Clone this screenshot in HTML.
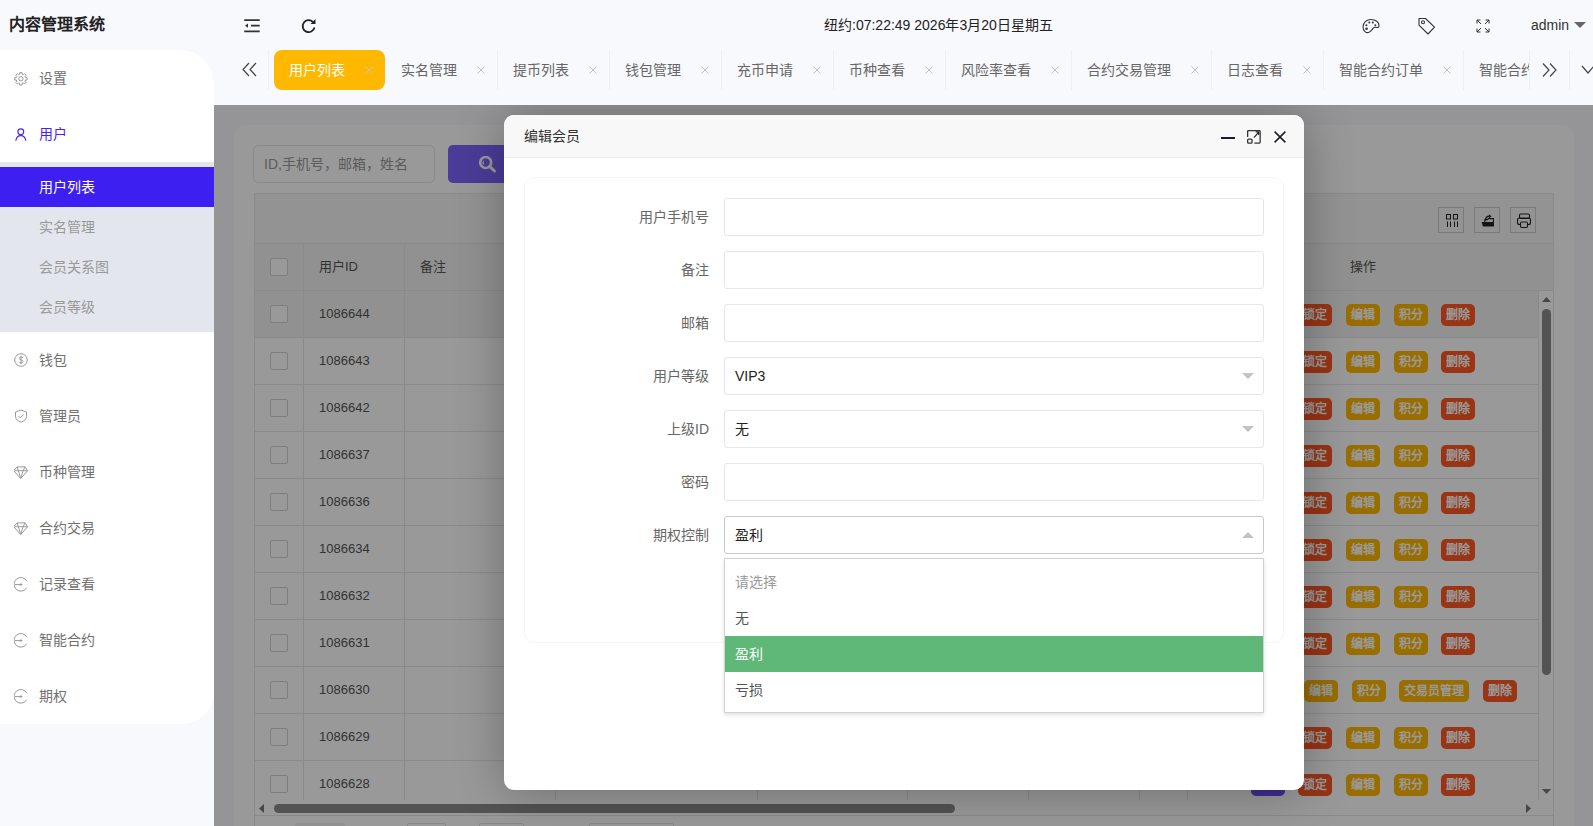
<!DOCTYPE html>
<html lang="zh-CN">
<head>
<meta charset="utf-8">
<style>
*{box-sizing:border-box;margin:0;padding:0}
html,body{width:1593px;height:826px;overflow:hidden}
body{position:relative;background:#f8f9fd;font-family:"Liberation Sans",sans-serif;font-size:14px;color:#333}
.abs{position:absolute}
.logo{left:9px;top:14px;font-size:16px;font-weight:bold;color:#222;line-height:22px;white-space:nowrap}
.side{left:0;top:50px;width:214px;height:674px;background:#fff;border-radius:0 34px 32px 0;overflow:hidden}
.mi{position:absolute;left:0;width:214px;height:56px;line-height:56px;color:#707070;white-space:nowrap}
.mi span{position:absolute;left:39px;top:0}
.mi svg{position:absolute;left:14px;top:21px}
.sub{position:absolute;left:0;top:112px;width:214px;height:170px;background:#e4e6ee}
.si{position:absolute;left:0;width:214px;height:40px;line-height:40px;color:#999}
.si span{position:absolute;left:39px}
.si.on{background:#3d1ff2;color:#fff}
.hd svg{position:absolute}
.time{left:824px;top:15px;line-height:20px;font-size:14px;color:#222;white-space:nowrap}
.admin{left:1531px;top:15px;line-height:20px;color:#333}
.tabs{left:274px;top:50px;width:1256px;height:40px;overflow:hidden;white-space:nowrap}
.tab{position:absolute;top:0;height:40px;line-height:40px;color:#666;border-right:1px solid #eef0f4}
.tab span{position:absolute;left:15px;top:0}
.tab i{position:absolute;top:16px;width:8px;height:8px}.tab i svg{display:block}
.tab.on{background:#ffb800;color:#fff;border-radius:8px;border-right-color:transparent}
.content{left:214px;top:105px;width:1379px;height:721px;background:#f8f9fd;overflow:hidden}
.shade{left:0;top:0;width:1379px;height:721px;background:rgba(0,0,0,0.4)}

.card{position:absolute;left:20px;top:20px;width:1340px;height:780px;background:#fff;border-radius:12px}
.sinput{position:absolute;left:39px;top:40px;width:182px;height:38px;border:1px solid #e6e6e6;border-radius:5px;padding-left:10px;line-height:36px;color:#999;background:#fff;white-space:nowrap}
.sbtn{position:absolute;left:234px;top:40px;width:84px;height:38px;background:#7d65ff;border-radius:5px}
.tbl{position:absolute;left:40px;top:88px;width:1300px;height:740px;border:1px solid #e6e6e6;background:#fff;overflow:hidden}
.ttool{position:absolute;left:0;top:0;width:1298px;height:50px;background:#f6f6f6;border-bottom:1px solid #e6e6e6}
.tico{position:absolute;top:13px;width:26px;height:26px;border:1px solid #ccc}
.tico svg{position:absolute;left:0;top:0}
.thead{position:absolute;left:0;top:50px;width:1298px;height:47px;background:#f2f2f2;border-bottom:1px solid #e6e6e6}
.trow{position:absolute;left:0;width:1283px;height:47px;background:#fff;border-bottom:1px solid #e6e6e6}
.trow.hov{background:#f2f2f2}
.vl{position:absolute;top:0;width:1px;height:47px;background:#e6e6e6}
.thead span,.trow span{position:absolute;top:0;line-height:46px;color:#555;font-size:13px;white-space:nowrap}
.cb{position:absolute;width:18px;height:18px;border:1px solid #d2d2d2;border-radius:2px;background:#fff}
.btn{position:absolute;top:13px;height:22px;line-height:22px;border-radius:5px;color:#fff;font-style:normal;font-size:12px;font-weight:bold;text-align:center;white-space:nowrap}
.btn.y{background:#ffb800}.btn.r{background:#ff5722}.btn.p{background:#6a4cf0}
.vscroll{position:absolute;left:1283px;top:97px;width:15px;height:509px;background:#fff;border-left:1px solid #e6e6e6}
.vthumb{position:absolute;left:3px;top:18px;width:9px;height:366px;border-radius:4.5px;background:#8a8a8a}
.hscroll{position:absolute;left:0;top:606px;width:1298px;height:15px;background:#fff}
.hthumb{position:absolute;left:19px;top:4px;width:681px;height:9px;border-radius:4.5px;background:#8a8a8a}
.pager{position:absolute;left:0;top:621px;width:1298px;height:60px;border-top:1px solid #e6e6e6;background:#fff}
.modal{left:290px;top:10px;width:800px;height:675px;background:#fff;border-radius:10px;box-shadow:1px 1px 50px rgba(0,0,0,.3);overflow:hidden}
.mtitle{position:absolute;left:0;top:0;width:800px;height:43px;background:#f8f8f8;border-bottom:1px solid #eee;padding-left:20px;line-height:42px;color:#333;font-size:14px}
.fcard{position:absolute;left:20px;top:62px;width:760px;height:466px;border:1px solid #f6f6f6;border-radius:10px}
.lbl{position:absolute;left:80px;width:125px;height:38px;line-height:38px;text-align:right;color:#666;white-space:nowrap}
.inp{position:absolute;left:220px;width:540px;height:38px;border:1px solid #e6e6e6;border-radius:3px;background:#fff;line-height:36px;padding-left:10px;color:#222}
.inp.focus{border-color:#c9c9c9}
.arr{position:absolute;right:9px;top:15px;width:0;height:0;border-left:6px solid transparent;border-right:6px solid transparent;border-top:6px solid #c2c2c2}
.arr.up{border-top:0;border-bottom:6px solid #c2c2c2;top:15px}
.dd{position:absolute;left:220px;top:443px;width:540px;height:155px;border:1px solid #d2d2d2;background:#fff;box-shadow:0 2px 4px rgba(0,0,0,.12);padding:5px 0}
.opt{height:36px;line-height:36px;padding-left:10px;color:#555}
.opt.ph{color:#999}
.opt.on{background:#5fb878;color:#fff}
.pg{position:absolute;top:7px;height:30px;border:1px solid #e2e2e2;border-radius:2px}
</style>
</head>
<body>
<div class="abs logo">内容管理系统</div>

<!-- sidebar -->
<div class="abs side">
  <div class="mi" style="top:0"><svg width="16" height="16" viewBox="0 0 16 16" fill="none" stroke="#999" stroke-width="1" stroke-linejoin="round"><circle cx="6.9" cy="7.8" r="2.2"/><path d="M5.68 3.26 L5.70 1.62 L8.10 1.62 L8.12 3.26 L9.25 3.73 L10.42 2.58 L12.12 4.28 L10.97 5.45 L11.44 6.58 L13.08 6.60 L13.08 9.00 L11.44 9.02 L10.97 10.15 L12.12 11.32 L10.42 13.02 L9.25 11.87 L8.12 12.34 L8.10 13.98 L5.70 13.98 L5.68 12.34 L4.55 11.87 L3.38 13.02 L1.68 11.32 L2.83 10.15 L2.36 9.02 L0.72 9.00 L0.72 6.60 L2.36 6.58 L2.83 5.45 L1.68 4.28 L3.38 2.58 L4.55 3.73Z"/></svg><span>设置</span></div>
  <div class="mi" style="top:56px;color:#4a1ff0"><svg width="14" height="14" viewBox="0 0 14 14" fill="none" stroke="#4a1ff0" stroke-width="1.1" style="left:15px;top:22px"><circle cx="5.8" cy="3.8" r="2.9"/><path d="M.8 12.8c.4-3.2 2.2-5.2 5-5.2s4.6 2 5 5.2"/></svg><span>用户</span></div>
  <div class="sub">
    <div class="si on" style="top:5px"><span>用户列表</span></div>
    <div class="si" style="top:45px"><span>实名管理</span></div>
    <div class="si" style="top:85px"><span>会员关系图</span></div>
    <div class="si" style="top:125px"><span>会员等级</span></div>
  </div>
  <div class="mi" style="top:282px"><svg width="14" height="14" viewBox="0 0 14 14" fill="none" stroke="#999" stroke-width="1"><circle cx="7" cy="7" r="6.3"/><path d="M8.9 4.9c-.4-.6-1-.9-1.9-.9-1 0-1.8.6-1.8 1.4 0 1.9 3.9 1.1 3.9 3.1 0 .9-.8 1.5-2 1.5-.9 0-1.6-.4-2-1M7 2.8v8.4"/></svg><span>钱包</span></div>
  <div class="mi" style="top:338px"><svg width="14" height="14" viewBox="0 0 14 14" fill="none" stroke="#999" stroke-width="1"><path d="M7 1l5.5 2v4.2c0 3-2.4 5.2-5.5 5.9C3.9 12.4 1.5 10.2 1.5 7.2V3z"/><path d="M4.5 7l1.8 1.8 3.4-3.4"/></svg><span>管理员</span></div>
  <div class="mi" style="top:394px"><svg width="15" height="15" viewBox="0 0 15 15" fill="none" stroke="#999" stroke-width="1"><path d="M3.2 1.9h7.8l2.7 3.8-7 7.8-7-7.8z"/><path d="M0.5 5.7h13.2M4.3 5.7l2.4 7.6 2.4-7.6M3.2 1.9l1.1 3.8M11 1.9l-1.9 3.8"/></svg><span>币种管理</span></div>
  <div class="mi" style="top:450px"><svg width="15" height="15" viewBox="0 0 15 15" fill="none" stroke="#999" stroke-width="1"><path d="M3.2 1.9h7.8l2.7 3.8-7 7.8-7-7.8z"/><path d="M0.5 5.7h13.2M4.3 5.7l2.4 7.6 2.4-7.6M3.2 1.9l1.1 3.8M11 1.9l-1.9 3.8"/></svg><span>合约交易</span></div>
  <div class="mi" style="top:506px"><svg width="15" height="15" viewBox="0 0 15 15" fill="none" stroke="#999" stroke-width="1"><path d="M12.9 4.3A6.8 6.8 0 1 0 12.7 10.7"/><path d="M0.5 7.6h6.5"/><path d="M6.3 5.9l2.4 1.7-2.4 1.7z" fill="#999" stroke="none"/></svg><span>记录查看</span></div>
  <div class="mi" style="top:562px"><svg width="15" height="15" viewBox="0 0 15 15" fill="none" stroke="#999" stroke-width="1"><path d="M12.9 4.3A6.8 6.8 0 1 0 12.7 10.7"/><path d="M0.5 7.6h6.5"/><path d="M6.3 5.9l2.4 1.7-2.4 1.7z" fill="#999" stroke="none"/></svg><span>智能合约</span></div>
  <div class="mi" style="top:618px"><svg width="15" height="15" viewBox="0 0 15 15" fill="none" stroke="#999" stroke-width="1"><path d="M12.9 4.3A6.8 6.8 0 1 0 12.7 10.7"/><path d="M0.5 7.6h6.5"/><path d="M6.3 5.9l2.4 1.7-2.4 1.7z" fill="#999" stroke="none"/></svg><span>期权</span></div>
</div>

<!-- header -->
<div class="hd">
  <svg style="left:244px;top:19px" width="16" height="14" viewBox="0 0 16 14" fill="none" stroke="#333" stroke-width="1.8"><path d="M0.2 1.1h15.5M7 6.7h8.7M0.2 12.4h15.5"/><path d="M1 6.7l3-2.1v4.2z" fill="#333" stroke="none"/></svg>
  <svg style="left:301px;top:18px" width="16" height="16" viewBox="0 0 16 16" fill="none" stroke="#222" stroke-width="1.8"><path d="M13.5 9.5A6 6 0 1 1 12 4"/><path d="M14.5 1v5h-5z" fill="#222" stroke="none"/></svg>
  <div class="abs time">纽约:07:22:49 2026年3月20日星期五</div>
  <svg style="left:1362px;top:18px" width="18" height="16" viewBox="0 0 18 16" fill="none" stroke="#333" stroke-width="1.1"><path d="M9 1.5c4.5 0 8 2.6 8 6 0 1.6-1 2.3-2.2 2-1.4-.4-2.3-.6-3.3.4C10 11.5 9.5 13 7 14.3 4.4 15.5 1 13 1 9 1 4.8 4.5 1.5 9 1.5z"/><circle cx="4.6" cy="10.8" r="1.3" fill="#333" stroke="none"/><circle cx="4.4" cy="7.2" r="1" fill="#333" stroke="none"/><circle cx="7.3" cy="4.5" r="1" fill="#333" stroke="none"/><circle cx="10.8" cy="4.5" r="1" fill="#333" stroke="none"/><circle cx="13.3" cy="7.3" r="1" fill="#333" stroke="none"/></svg>
  <svg style="left:1418px;top:17px" width="18" height="18" viewBox="0 0 18 18" fill="none" stroke="#333" stroke-width="1.1"><path d="M1 1.5h6.5l9 8.7-6.5 6.8L1 8.2z" stroke-linejoin="round"/><circle cx="5" cy="5.3" r="1.5"/></svg>
  <svg style="left:1476px;top:19px" width="14" height="14" viewBox="0 0 14 14" fill="none" stroke="#333" stroke-width="1"><path d="M1 1l4 4M1 1v3.5M1 1h3.5M13 1L9 5M13 1v3.5M13 1H9.5M1 13l4-4M1 13V9.5M1 13h3.5M13 13L9 9M13 13V9.5M13 13H9.5"/></svg>
  <div class="abs admin">admin</div>
  <svg style="left:1574px;top:22px" width="12" height="6" viewBox="0 0 12 6"><path d="M0 0h12L6 6z" fill="#666"/></svg>
</div>

<!-- tabs -->
<svg class="abs" style="left:242px;top:62px" width="15" height="15" viewBox="0 0 15 15" fill="none" stroke="#444" stroke-width="1.2"><path d="M7 1L1 7.5 7 14M14 1L8 7.5 14 14"/></svg>
<div class="abs" style="left:268px;top:50px;width:1px;height:40px;background:#eef0f4"></div>
<div class="abs tabs" id="tabs"><div class="tab on" style="left:0px;width:111px"><span>用户列表</span><i style="left:91px"><svg width="8" height="8" viewBox="0 0 8 8" stroke="#c2c2c2" stroke-width="1"><path d="M.5 .5l7 7M7.5 .5l-7 7"/></svg></i></div><div class="tab" style="left:112px;width:112px"><span>实名管理</span><i style="left:91px"><svg width="8" height="8" viewBox="0 0 8 8" stroke="#c2c2c2" stroke-width="1"><path d="M.5 .5l7 7M7.5 .5l-7 7"/></svg></i></div><div class="tab" style="left:224px;width:112px"><span>提币列表</span><i style="left:91px"><svg width="8" height="8" viewBox="0 0 8 8" stroke="#c2c2c2" stroke-width="1"><path d="M.5 .5l7 7M7.5 .5l-7 7"/></svg></i></div><div class="tab" style="left:336px;width:112px"><span>钱包管理</span><i style="left:91px"><svg width="8" height="8" viewBox="0 0 8 8" stroke="#c2c2c2" stroke-width="1"><path d="M.5 .5l7 7M7.5 .5l-7 7"/></svg></i></div><div class="tab" style="left:448px;width:112px"><span>充币申请</span><i style="left:91px"><svg width="8" height="8" viewBox="0 0 8 8" stroke="#c2c2c2" stroke-width="1"><path d="M.5 .5l7 7M7.5 .5l-7 7"/></svg></i></div><div class="tab" style="left:560px;width:112px"><span>币种查看</span><i style="left:91px"><svg width="8" height="8" viewBox="0 0 8 8" stroke="#c2c2c2" stroke-width="1"><path d="M.5 .5l7 7M7.5 .5l-7 7"/></svg></i></div><div class="tab" style="left:672px;width:126px"><span>风险率查看</span><i style="left:105px"><svg width="8" height="8" viewBox="0 0 8 8" stroke="#c2c2c2" stroke-width="1"><path d="M.5 .5l7 7M7.5 .5l-7 7"/></svg></i></div><div class="tab" style="left:798px;width:140px"><span>合约交易管理</span><i style="left:119px"><svg width="8" height="8" viewBox="0 0 8 8" stroke="#c2c2c2" stroke-width="1"><path d="M.5 .5l7 7M7.5 .5l-7 7"/></svg></i></div><div class="tab" style="left:938px;width:112px"><span>日志查看</span><i style="left:91px"><svg width="8" height="8" viewBox="0 0 8 8" stroke="#c2c2c2" stroke-width="1"><path d="M.5 .5l7 7M7.5 .5l-7 7"/></svg></i></div><div class="tab" style="left:1050px;width:140px"><span>智能合约订单</span><i style="left:119px"><svg width="8" height="8" viewBox="0 0 8 8" stroke="#c2c2c2" stroke-width="1"><path d="M.5 .5l7 7M7.5 .5l-7 7"/></svg></i></div><div class="tab" style="left:1190px;width:112px"><span>智能合约</span><i style="left:91px"><svg width="8" height="8" viewBox="0 0 8 8" stroke="#c2c2c2" stroke-width="1"><path d="M.5 .5l7 7M7.5 .5l-7 7"/></svg></i></div></div>
<div class="abs" style="left:1529px;top:50px;width:1px;height:40px;background:#eef0f4"></div>
<svg class="abs" style="left:1542px;top:63px" width="15" height="14" viewBox="0 0 15 14" fill="none" stroke="#444" stroke-width="1.2"><path d="M1 0.5L7 7 1 13.5M8 0.5L14 7 8 13.5"/></svg>
<div class="abs" style="left:1569px;top:50px;width:1px;height:40px;background:#eef0f4"></div>
<svg class="abs" style="left:1581px;top:65px" width="14" height="9" viewBox="0 0 14 9" fill="none" stroke="#444" stroke-width="1.2"><path d="M1 1l6 7 6-7"/></svg>

<!-- content -->
<div class="abs content" id="content">
<div class="card"></div>
<div class="sinput">ID,手机号，邮箱，姓名</div>
<div class="sbtn"><svg style="position:absolute;left:31px;top:11px" width="18" height="18" viewBox="0 0 18 18" fill="none" stroke="#fff"><circle cx="6.7" cy="6.5" r="5.5" stroke-width="2.6"/><path d="M10.8 10.6l4.7 4.4" stroke-width="3" stroke-linecap="round"/><path d="M4.6 4.8a3 3 0 0 0 0 3.6" stroke-width="1.2"/></svg></div>
<div class="tbl">
<div class="ttool"><i class="tico" style="left:1183px"><svg width="24" height="24" viewBox="0 0 24 24" fill="none" stroke="#222" stroke-width="1"><rect x="7.5" y="6.5" width="4" height="4.5"/><rect x="14.5" y="6.5" width="4" height="4.5"/><path d="M8.5 13.5v5.5M11.5 13.5v5.5M15.5 13.5v5.5M18.5 13.5v5.5"/></svg></i><i class="tico" style="left:1219px"><svg width="24" height="24" viewBox="0 0 24 24"><path d="M9.8 15V11.6h2.6l1-1h5v7.6" fill="none" stroke="#222" stroke-width="1.1"/><path d="M6.6 14h12v4.6H8z" fill="#222"/><path d="M10.6 12.5c0-2.6 1.4-4.3 3.8-4.3" fill="none" stroke="#222" stroke-width="1.3"/><path d="M14 6.3l2.5 2-2.5 2z" fill="#222"/></svg></i><i class="tico" style="left:1255px"><svg width="24" height="24" viewBox="0 0 24 24" fill="none" stroke="#222" stroke-width="1.1"><rect x="8.5" y="6" width="10" height="4.5" rx="1.2"/><rect x="6.5" y="10" width="13" height="6.5" rx="2"/><rect x="9.5" y="14" width="7" height="5.5" rx="1.2" fill="#f6f6f6"/></svg></i></div>
<div class="thead">
<b class="vl" style="left:48px"></b>
<b class="vl" style="left:149px"></b>
<b class="vl" style="left:300px"></b>
<b class="vl" style="left:502px"></b>
<b class="vl" style="left:652px"></b>
<b class="vl" style="left:773px"></b>
<b class="vl" style="left:884px"></b>
<b class="vl" style="left:932px"></b>
<i class="cb" style="left:15px;top:14px"></i><span style="left:64px">用户ID</span><span style="left:165px">备注</span><span style="left:1095px">操作</span>
</div>
<div class="trow hov" style="top:97px">
<b class="vl" style="left:48px"></b>
<b class="vl" style="left:149px"></b>
<b class="vl" style="left:300px"></b>
<b class="vl" style="left:502px"></b>
<b class="vl" style="left:652px"></b>
<b class="vl" style="left:773px"></b>
<b class="vl" style="left:884px"></b>
<b class="vl" style="left:932px"></b>
<b class="vl" style="left:1283px"></b>
<i class="cb" style="left:15px;top:14px"></i><span style="left:64px">1086644</span>
<em class="btn p" style="left:996px;width:34px"></em>
<em class="btn r" style="left:1043px;width:34px">锁定</em>
<em class="btn y" style="left:1091px;width:34px">编辑</em>
<em class="btn y" style="left:1139px;width:34px">积分</em>
<em class="btn r" style="left:1186px;width:34px">删除</em>
</div>
<div class="trow" style="top:144px">
<b class="vl" style="left:48px"></b>
<b class="vl" style="left:149px"></b>
<b class="vl" style="left:300px"></b>
<b class="vl" style="left:502px"></b>
<b class="vl" style="left:652px"></b>
<b class="vl" style="left:773px"></b>
<b class="vl" style="left:884px"></b>
<b class="vl" style="left:932px"></b>
<b class="vl" style="left:1283px"></b>
<i class="cb" style="left:15px;top:14px"></i><span style="left:64px">1086643</span>
<em class="btn p" style="left:996px;width:34px"></em>
<em class="btn r" style="left:1043px;width:34px">锁定</em>
<em class="btn y" style="left:1091px;width:34px">编辑</em>
<em class="btn y" style="left:1139px;width:34px">积分</em>
<em class="btn r" style="left:1186px;width:34px">删除</em>
</div>
<div class="trow" style="top:191px">
<b class="vl" style="left:48px"></b>
<b class="vl" style="left:149px"></b>
<b class="vl" style="left:300px"></b>
<b class="vl" style="left:502px"></b>
<b class="vl" style="left:652px"></b>
<b class="vl" style="left:773px"></b>
<b class="vl" style="left:884px"></b>
<b class="vl" style="left:932px"></b>
<b class="vl" style="left:1283px"></b>
<i class="cb" style="left:15px;top:14px"></i><span style="left:64px">1086642</span>
<em class="btn p" style="left:996px;width:34px"></em>
<em class="btn r" style="left:1043px;width:34px">锁定</em>
<em class="btn y" style="left:1091px;width:34px">编辑</em>
<em class="btn y" style="left:1139px;width:34px">积分</em>
<em class="btn r" style="left:1186px;width:34px">删除</em>
</div>
<div class="trow" style="top:238px">
<b class="vl" style="left:48px"></b>
<b class="vl" style="left:149px"></b>
<b class="vl" style="left:300px"></b>
<b class="vl" style="left:502px"></b>
<b class="vl" style="left:652px"></b>
<b class="vl" style="left:773px"></b>
<b class="vl" style="left:884px"></b>
<b class="vl" style="left:932px"></b>
<b class="vl" style="left:1283px"></b>
<i class="cb" style="left:15px;top:14px"></i><span style="left:64px">1086637</span>
<em class="btn p" style="left:996px;width:34px"></em>
<em class="btn r" style="left:1043px;width:34px">锁定</em>
<em class="btn y" style="left:1091px;width:34px">编辑</em>
<em class="btn y" style="left:1139px;width:34px">积分</em>
<em class="btn r" style="left:1186px;width:34px">删除</em>
</div>
<div class="trow" style="top:285px">
<b class="vl" style="left:48px"></b>
<b class="vl" style="left:149px"></b>
<b class="vl" style="left:300px"></b>
<b class="vl" style="left:502px"></b>
<b class="vl" style="left:652px"></b>
<b class="vl" style="left:773px"></b>
<b class="vl" style="left:884px"></b>
<b class="vl" style="left:932px"></b>
<b class="vl" style="left:1283px"></b>
<i class="cb" style="left:15px;top:14px"></i><span style="left:64px">1086636</span>
<em class="btn p" style="left:996px;width:34px"></em>
<em class="btn r" style="left:1043px;width:34px">锁定</em>
<em class="btn y" style="left:1091px;width:34px">编辑</em>
<em class="btn y" style="left:1139px;width:34px">积分</em>
<em class="btn r" style="left:1186px;width:34px">删除</em>
</div>
<div class="trow" style="top:332px">
<b class="vl" style="left:48px"></b>
<b class="vl" style="left:149px"></b>
<b class="vl" style="left:300px"></b>
<b class="vl" style="left:502px"></b>
<b class="vl" style="left:652px"></b>
<b class="vl" style="left:773px"></b>
<b class="vl" style="left:884px"></b>
<b class="vl" style="left:932px"></b>
<b class="vl" style="left:1283px"></b>
<i class="cb" style="left:15px;top:14px"></i><span style="left:64px">1086634</span>
<em class="btn p" style="left:996px;width:34px"></em>
<em class="btn r" style="left:1043px;width:34px">锁定</em>
<em class="btn y" style="left:1091px;width:34px">编辑</em>
<em class="btn y" style="left:1139px;width:34px">积分</em>
<em class="btn r" style="left:1186px;width:34px">删除</em>
</div>
<div class="trow" style="top:379px">
<b class="vl" style="left:48px"></b>
<b class="vl" style="left:149px"></b>
<b class="vl" style="left:300px"></b>
<b class="vl" style="left:502px"></b>
<b class="vl" style="left:652px"></b>
<b class="vl" style="left:773px"></b>
<b class="vl" style="left:884px"></b>
<b class="vl" style="left:932px"></b>
<b class="vl" style="left:1283px"></b>
<i class="cb" style="left:15px;top:14px"></i><span style="left:64px">1086632</span>
<em class="btn p" style="left:996px;width:34px"></em>
<em class="btn r" style="left:1043px;width:34px">锁定</em>
<em class="btn y" style="left:1091px;width:34px">编辑</em>
<em class="btn y" style="left:1139px;width:34px">积分</em>
<em class="btn r" style="left:1186px;width:34px">删除</em>
</div>
<div class="trow" style="top:426px">
<b class="vl" style="left:48px"></b>
<b class="vl" style="left:149px"></b>
<b class="vl" style="left:300px"></b>
<b class="vl" style="left:502px"></b>
<b class="vl" style="left:652px"></b>
<b class="vl" style="left:773px"></b>
<b class="vl" style="left:884px"></b>
<b class="vl" style="left:932px"></b>
<b class="vl" style="left:1283px"></b>
<i class="cb" style="left:15px;top:14px"></i><span style="left:64px">1086631</span>
<em class="btn p" style="left:996px;width:34px"></em>
<em class="btn r" style="left:1043px;width:34px">锁定</em>
<em class="btn y" style="left:1091px;width:34px">编辑</em>
<em class="btn y" style="left:1139px;width:34px">积分</em>
<em class="btn r" style="left:1186px;width:34px">删除</em>
</div>
<div class="trow" style="top:473px">
<b class="vl" style="left:48px"></b>
<b class="vl" style="left:149px"></b>
<b class="vl" style="left:300px"></b>
<b class="vl" style="left:502px"></b>
<b class="vl" style="left:652px"></b>
<b class="vl" style="left:773px"></b>
<b class="vl" style="left:884px"></b>
<b class="vl" style="left:932px"></b>
<b class="vl" style="left:1283px"></b>
<i class="cb" style="left:15px;top:14px"></i><span style="left:64px">1086630</span>
<em class="btn r" style="left:953px;width:34px">锁定</em>
<em class="btn p" style="left:1001px;width:34px"></em>
<em class="btn y" style="left:1049px;width:34px">编辑</em>
<em class="btn y" style="left:1097px;width:34px">积分</em>
<em class="btn y" style="left:1144px;width:70px">交易员管理</em>
<em class="btn r" style="left:1228px;width:34px">删除</em>
</div>
<div class="trow" style="top:520px">
<b class="vl" style="left:48px"></b>
<b class="vl" style="left:149px"></b>
<b class="vl" style="left:300px"></b>
<b class="vl" style="left:502px"></b>
<b class="vl" style="left:652px"></b>
<b class="vl" style="left:773px"></b>
<b class="vl" style="left:884px"></b>
<b class="vl" style="left:932px"></b>
<b class="vl" style="left:1283px"></b>
<i class="cb" style="left:15px;top:14px"></i><span style="left:64px">1086629</span>
<em class="btn p" style="left:996px;width:34px"></em>
<em class="btn r" style="left:1043px;width:34px">锁定</em>
<em class="btn y" style="left:1091px;width:34px">编辑</em>
<em class="btn y" style="left:1139px;width:34px">积分</em>
<em class="btn r" style="left:1186px;width:34px">删除</em>
</div>
<div class="trow" style="top:567px">
<b class="vl" style="left:48px"></b>
<b class="vl" style="left:149px"></b>
<b class="vl" style="left:300px"></b>
<b class="vl" style="left:502px"></b>
<b class="vl" style="left:652px"></b>
<b class="vl" style="left:773px"></b>
<b class="vl" style="left:884px"></b>
<b class="vl" style="left:932px"></b>
<b class="vl" style="left:1283px"></b>
<i class="cb" style="left:15px;top:14px"></i><span style="left:64px">1086628</span>
<em class="btn p" style="left:996px;width:34px"></em>
<em class="btn r" style="left:1043px;width:34px">锁定</em>
<em class="btn y" style="left:1091px;width:34px">编辑</em>
<em class="btn y" style="left:1139px;width:34px">积分</em>
<em class="btn r" style="left:1186px;width:34px">删除</em>
</div>
<div class="vscroll"><svg style="position:absolute;left:3px;top:6px" width="9" height="5" viewBox="0 0 9 5"><path d="M0 5h9L4.5 0z" fill="#777"/></svg><i class="vthumb"></i><svg style="position:absolute;left:3px;top:498px" width="9" height="5" viewBox="0 0 9 5"><path d="M0 0h9L4.5 5z" fill="#777"/></svg></div>
<div class="hscroll"><svg style="position:absolute;left:4px;top:4px" width="5" height="9" viewBox="0 0 5 9"><path d="M5 0v9L0 4.5z" fill="#777"/></svg><i class="hthumb"></i><svg style="position:absolute;left:1271px;top:4px" width="5" height="9" viewBox="0 0 5 9"><path d="M0 0v9L5 4.5z" fill="#777"/></svg></div>
<div class="pager"><i class="pg" style="left:40px;width:50px;background:#f2f2f2;border-color:#f2f2f2"></i><i class="pg" style="left:152px;width:39px"></i><i class="pg" style="left:224px;width:45px"></i><i class="pg" style="left:334px;width:85px"></i></div>
</div>
<div class="abs shade"></div>
<!-- modal -->
<div class="abs modal">
  <div class="mtitle">编辑会员</div>
  <svg class="abs" style="left:717px;top:21px" width="14" height="3" viewBox="0 0 14 3"><rect x="0" y="1" width="14" height="2" fill="#1b1b2e"/></svg>
  <svg class="abs" style="left:742px;top:14px" width="16" height="16" viewBox="0 0 16 16" fill="none" stroke="#333" stroke-width="1.3"><path d="M1.65 7.9V2.4q0-.75.75-.75h11q.75 0 .75.75v10.9q0 .75-.75.75H8.4"/><rect x="1.65" y="10.05" width="4.4" height="4" rx=".9"/><path d="M7.9 8.6l4.7-5.3M9.6 2.9h3.1V6" stroke="#222" stroke-width="1.2"/></svg>
  <svg class="abs" style="left:769px;top:15px" width="14" height="14" viewBox="0 0 14 14" fill="none" stroke="#1b1b2e" stroke-width="1.5"><path d="M1.6 1.6l10.8 10.8M12.4 1.6L1.6 12.4"/></svg>
  <div class="fcard"></div>
  <div class="lbl" style="top:83px">用户手机号</div><div class="inp" style="top:83px"></div>
  <div class="lbl" style="top:136px">备注</div><div class="inp" style="top:136px"></div>
  <div class="lbl" style="top:189px">邮箱</div><div class="inp" style="top:189px"></div>
  <div class="lbl" style="top:242px">用户等级</div><div class="inp sel" style="top:242px">VIP3<i class="arr"></i></div>
  <div class="lbl" style="top:295px">上级ID</div><div class="inp sel" style="top:295px">无<i class="arr"></i></div>
  <div class="lbl" style="top:348px">密码</div><div class="inp" style="top:348px"></div>
  <div class="lbl" style="top:401px">期权控制</div><div class="inp sel focus" style="top:401px">盈利<i class="arr up"></i></div>
  <div class="dd">
    <div class="opt ph">请选择</div>
    <div class="opt">无</div>
    <div class="opt on">盈利</div>
    <div class="opt">亏损</div>
  </div>
</div>
</div>


</body>
</html>
